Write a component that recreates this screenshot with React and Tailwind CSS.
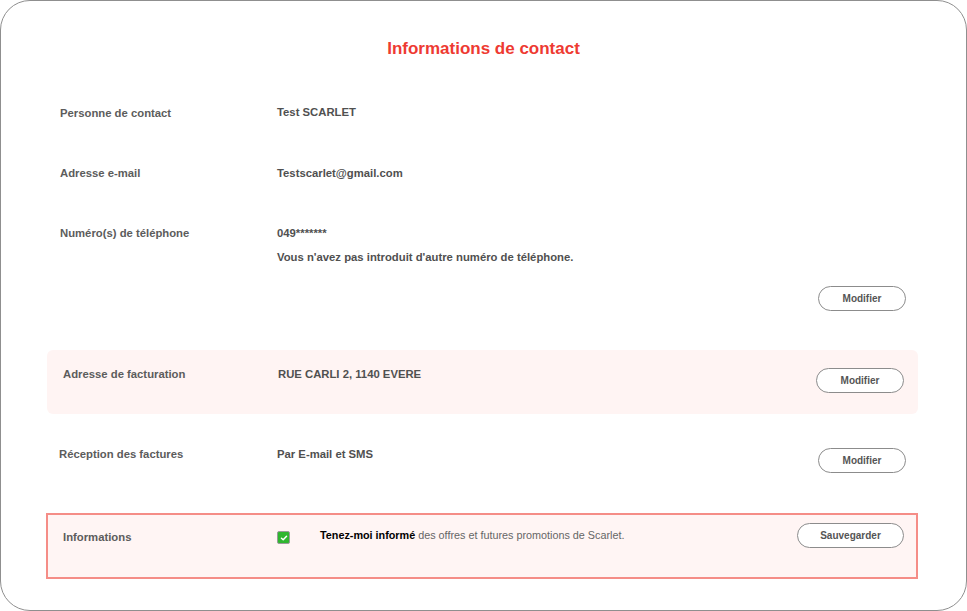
import React from 'react';

const Btn = ({ children, w = 'w-[88px]' }) => (
  <button className={`${w} h-[25px] rounded-full border border-[#8c8c8c] bg-white text-[10px] font-bold text-[#555]`}>
    {children}
  </button>
);

const Label = ({ children }) => (
  <div className="w-[217px] shrink-0 text-[11.3px] font-bold text-[#5c5c5c]">{children}</div>
);

const Value = ({ children }) => (
  <div className="text-[11.3px] font-bold text-[#505050]">{children}</div>
);

export default function App() {
  return (
    <div className="w-[967px] h-[611px] bg-white" style={{ fontFamily: '"Liberation Sans", Arial, sans-serif' }}>
      <div className="h-full border border-[#8f8f8f] rounded-[30px] overflow-hidden">
        <h1 className="pt-[38px] text-center text-[17px] font-bold text-[#ee3a32] leading-[20px]">
          Informations de contact
        </h1>

        {/* contact */}
        <div className="pl-[59px] pr-[60px] pt-[47px]">
          <div className="flex h-[60px] leading-[14px]">
            <Label>Personne de contact</Label>
            <Value><span className="relative -top-[1px]">Test SCARLET</span></Value>
          </div>
          <div className="flex h-[60px] leading-[14px]">
            <Label>Adresse e-mail</Label>
            <Value>Testscarlet@gmail.com</Value>
          </div>
          <div className="flex leading-[14px]">
            <Label>Numéro(s) de téléphone</Label>
            <div className="flex flex-col gap-[10px]">
              <Value>049*******</Value>
              <Value>Vous n'avez pas introduit d'autre numéro de téléphone.</Value>
            </div>
          </div>
          <div className="flex justify-end mt-[22px]">
            <Btn>Modifier</Btn>
          </div>
        </div>

        {/* facturation */}
        <div className="ml-[46px] mr-[48px] mt-[39px] h-[64px] rounded-[6px] bg-[#fff4f3] flex items-start pl-[16px] pr-[14px] pt-[17px] leading-[14px]">
          <Label>Adresse de facturation</Label>
          <div className="flex-1 -ml-[2px]"><Value>RUE CARLI 2, 1140 EVERE</Value></div>
          <div className="mt-[1px]"><Btn>Modifier</Btn></div>
        </div>

        <div className="flex items-start pl-[58px] pr-[60px] mt-[33px] leading-[14px]">
          <Label>Réception des factures</Label>
          <div className="flex-1 ml-[1px]"><Value>Par E-mail et SMS</Value></div>
          <div className="mt-[1px]"><Btn>Modifier</Btn></div>
        </div>

        {/* informations */}
        <div className="ml-[45px] mr-[48px] mt-[40px] h-[66px] border-2 border-[#f58d87] bg-[#fff5f4] flex items-start pl-[15px] pr-[12px] pt-[8px] leading-[14px]">
          <div className="w-[214px] shrink-0 pt-[7px] text-[11.3px] font-bold text-[#5c5c5c]">Informations</div>
          <div className="pt-[8px] flex items-start">
            <span className="w-[13px] h-[13px] rounded-[2px] border border-[#9a9a9a] bg-[#2fb62f] flex items-center justify-center">
              <svg viewBox="0 0 10 10" className="w-[8px] h-[8px]">
                <path d="M1.8 5.2 L4 7.2 L8.2 2.8" fill="none" stroke="white" strokeWidth="1.8" strokeLinecap="round" strokeLinejoin="round" />
              </svg>
            </span>
          </div>
          <div className="flex-1 pl-[30px] pt-[5px] text-[10.8px] text-[#666]">
            <span className="font-bold text-black">Tenez-moi informé</span> des offres et futures promotions de Scarlet.
          </div>
          <Btn w="w-[107px]">Sauvegarder</Btn>
        </div>
      </div>
    </div>
  );
}
